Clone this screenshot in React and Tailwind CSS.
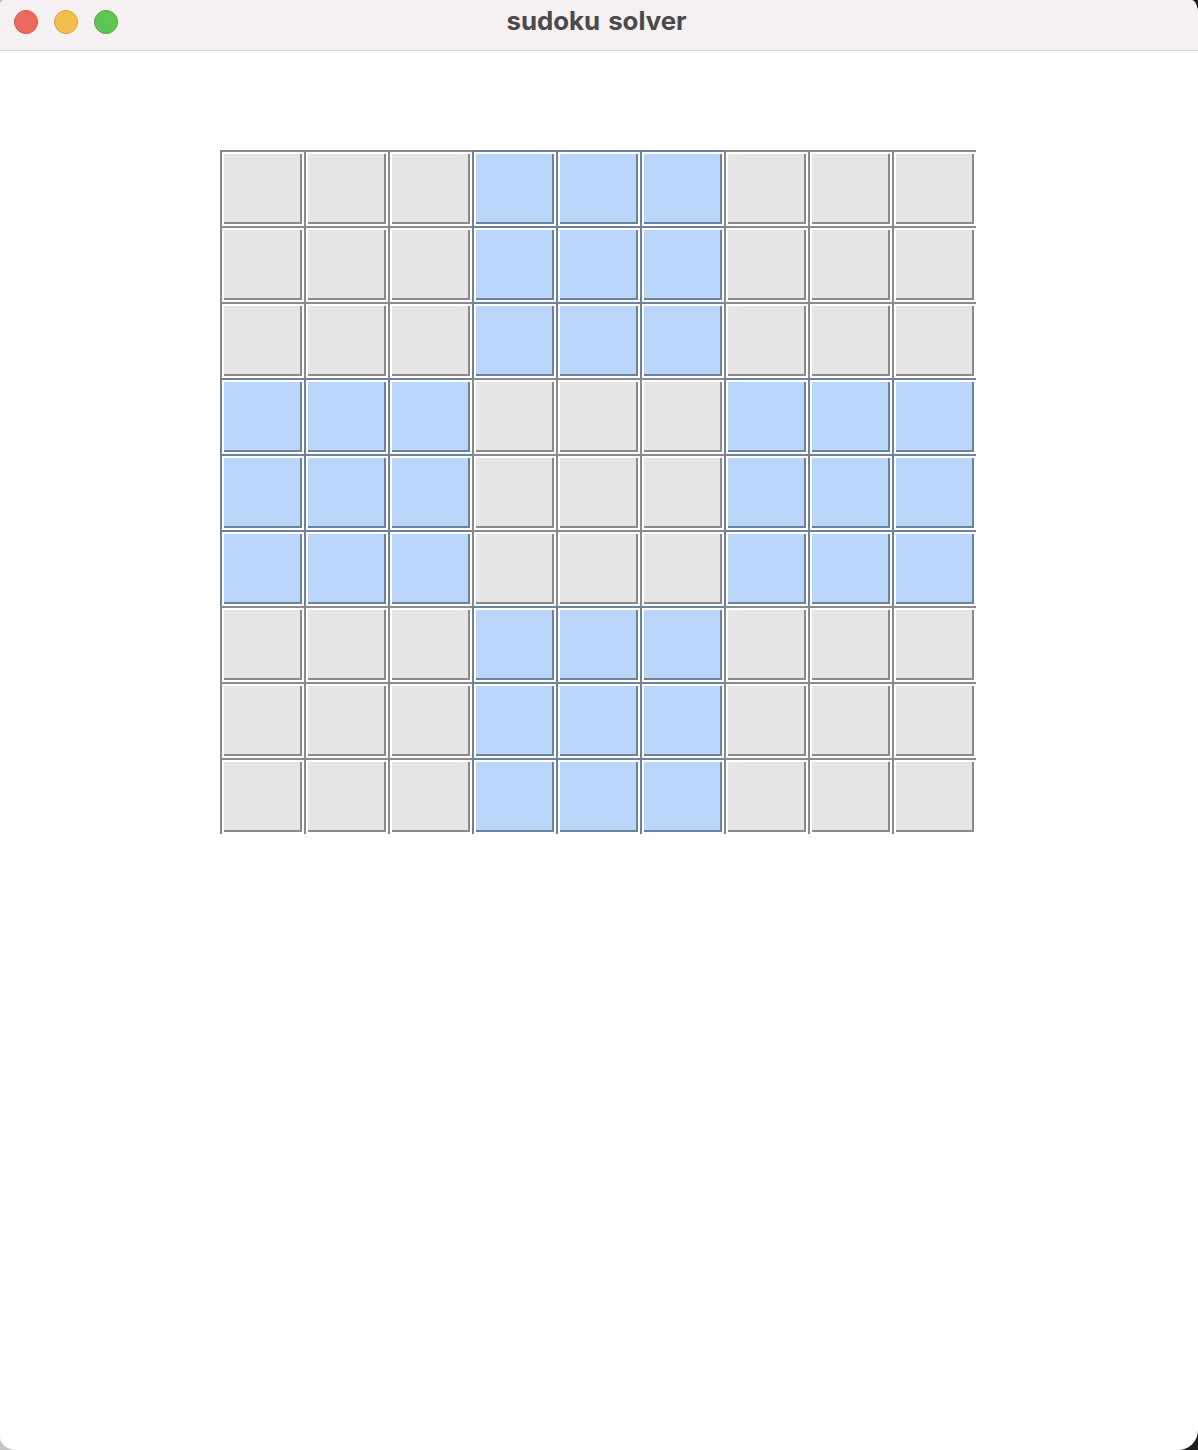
const EDGE = { gray: "bg-[#8a8a8a]", blue: "bg-[#6f829a]" };
const FILL = { gray: "bg-[#e6e6e6]", blue: "bg-[#bad7fb]" };

function Cell({ tone }) {
  return (
    <div className={`h-[76px] w-[84px] pt-[2px] pl-[2px] ${EDGE[tone]}`}>
      <div className="h-full w-full bg-white pt-[2px] pr-[2px] pb-[2px] pl-[2px]">
        <div className={`h-full w-full pr-[2px] pb-[2px] ${EDGE[tone]}`}>
          <div className={`h-full w-full ${FILL[tone]}`} />
        </div>
      </div>
    </div>
  );
}

function toneAt(i) {
  const row = Math.floor(i / 27);
  const col = Math.floor((i % 9) / 3);
  return (row + col) % 2 ? "blue" : "gray";
}

export default function App() {
  return (
    <div className="h-[1450px] w-[1198px] bg-[linear-gradient(90deg,#c4c4c4_50%,#1d1d1d_50%)]">
      <div className="flex h-full w-full flex-col overflow-hidden rounded-[5px_7px_20px_17px/6px_14px_20px_13px] bg-white">
        <header className="grid h-[51px] shrink-0 grid-cols-[1fr_auto_1fr] border-b border-[#d8d4d6] bg-[#f6f0f3]">
          <div className="flex gap-4 pt-[10px] pl-[14px]">
            <span className="size-6 rounded-full border border-[#d9534b] bg-[#ed6a5f]" />
            <span className="size-6 rounded-full border border-[#d8a243] bg-[#f5bf4f]" />
            <span className="size-6 rounded-full border border-[#51a73e] bg-[#61c554]" />
          </div>
          <h1 className="mr-[5px] pt-[5px] font-['Inter',sans-serif] text-[25.8px] leading-8 font-bold [word-spacing:2px] text-[#4b494a]">
            sudoku solver
          </h1>
          <div />
        </header>
        <main className="pt-[99px] pl-[220px]">
          <div className="grid w-[756px] grid-cols-9">
            {Array.from({ length: 81 }, (_, i) => (
              <Cell key={i} tone={toneAt(i)} />
            ))}
          </div>
        </main>
      </div>
    </div>
  );
}
